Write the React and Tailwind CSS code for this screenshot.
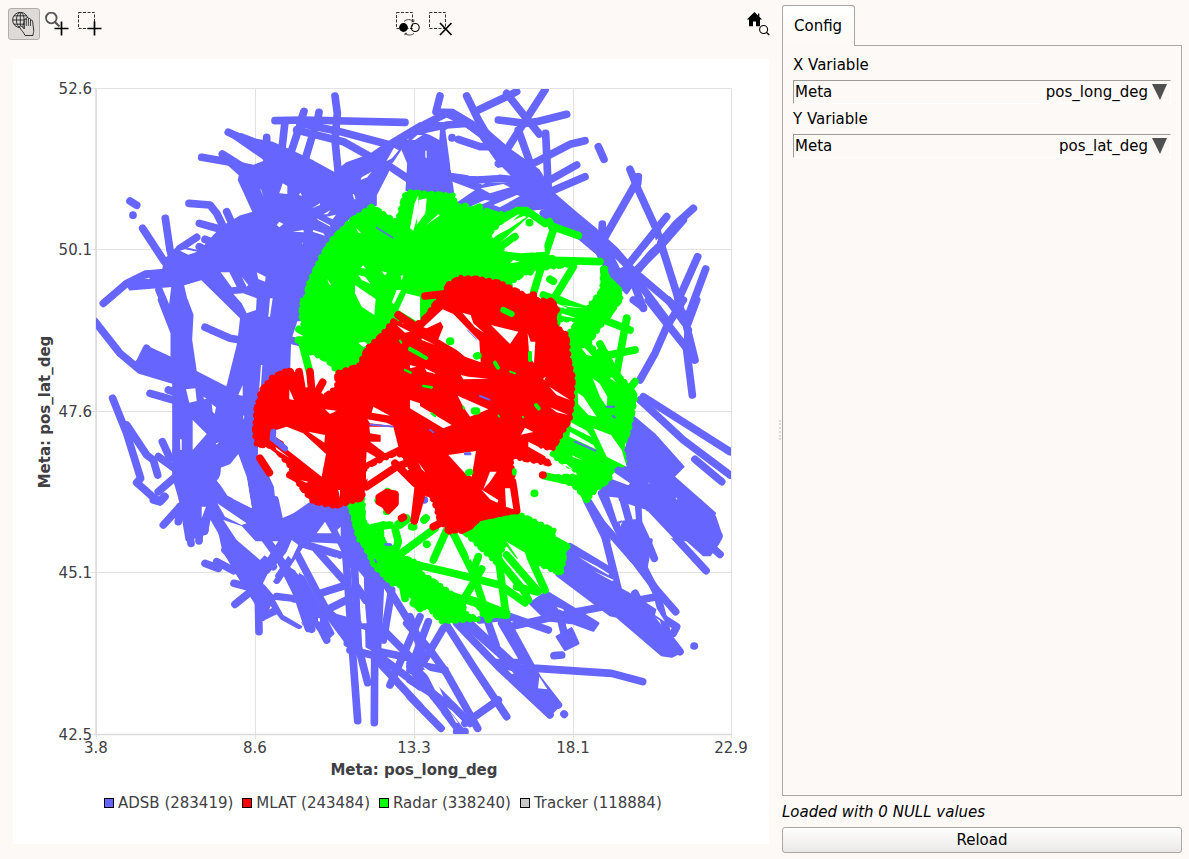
import React from "react";

const BLUE = "#6666ff";
const GREEN = "#00ff00";
const RED = "#ff0000";

// Track data is stored in six map tiles, three units per plot pixel.
const ORIGINS = {
  A: [90, 80],
  B: [410, 80],
  C: [90, 300],
  D: [410, 300],
  E: [90, 500],
  F: [410, 500],
};

const ADSB = {
  areas: {
    A: [
      "407,157 455,163 500,180 545,188 600,212 670,245 733,280 770,250 840,225 890,190 990,130 990,165 945,175 905,225 893,275 857,345 857,375 780,410 710,490 660,590 630,720 460,720 335,597 275,615 120,628 110,610 165,575 220,570 225,540 265,500 330,515 370,470 400,440 450,410 492,398 447,300 450,285 390,230 430,245 490,258 525,245 520,235",
      "250,600 275,600 303,720 235,720",
      "930,190 990,170 990,335 950,330 955,250",
    ],
    B: [
      "0,150 50,125 100,130 120,280 130,345 0,330",
      "75,88 130,90 230,150 300,210 385,270 430,340 500,400 560,450 620,505 690,585 650,640 600,590 560,520 500,470 430,420 400,380 330,310 260,240 210,170 130,110",
      "150,375 240,330 330,310 400,340 400,385 250,400",
    ],
    C: [
      "245,0 290,0 307,45 303,120 317,215 400,258 500,300 500,460 390,500 350,560 270,600 250,530 250,240 150,215 135,190 180,145 245,175",
      "460,0 640,0 600,120 597,210 540,240 500,300 500,470 440,460 400,300 415,250 445,130",
      "250,450 390,490 388,520 380,545 410,590 490,630 475,540 445,460 505,470 548,560 558,650 580,665 660,610 780,620 800,720 400,720 360,650 350,700 290,720 270,600",
    ],
    D: [
      "670,350 735,405 820,500 790,530 915,640 905,655 935,705 930,720 815,720 720,630 690,620 570,580 610,500 650,440",
    ],
    E: [
      "380,60 420,110 520,190 560,160 515,250 550,290 520,360 510,330 440,220 400,150",
      "590,200 640,230 700,340 730,400 710,420 670,370 640,330",
      "755,60 790,80 880,240 870,460 830,440 825,230 800,200 770,200",
    ],
    F: [
      "720,0 870,0 915,50 935,110 925,130 900,165 880,165 830,120",
      "465,135 490,145 600,208 620,260 690,300 770,400 815,455 785,470 755,465 620,350 600,345 440,225",
      "360,310 410,275 500,330 565,370 550,392 490,370 410,360",
      "440,410 485,385 505,430 465,450",
      "640,65 690,60 725,120 710,200 670,190 620,130",
      "260,480 340,480 320,510 260,505",
      "355,500 400,560 450,615 415,650 300,530",
    ],
  },
  tracks: {
    A: [
      "735,48 742,100 735,180 745,280",
      "555,122 640,120 945,127",
      "642,94 636,112",
      "687,97 683,120",
      "585,125 575,215",
      "632,130 597,235",
      "672,150 642,250",
      "630,130 750,155 890,192",
      "620,150 760,185 850,235",
      "415,157 600,240",
      "335,232 430,248",
      "397,222 520,300",
      "530,172 530,200",
      "120,363 140,376",
      "129,405 129,406",
      "297,370 360,375 380,400 400,440",
      "410,395 430,440",
      "328,430 400,450",
      "345,478 400,500",
      "328,500 365,520",
      "320,472 270,505",
      "226,415 240,510 270,620",
      "158,445 220,540 270,600",
      "40,670 110,610 165,583 260,580",
      "207,630 245,720",
      "900,260 960,300",
      "900,240 940,180",
    ],
    B: [
      "90,48 78,95",
      "0,160 50,130 110,100 230,160",
      "0,190 110,135 170,130 240,180",
      "170,48 205,120 240,180",
      "205,90 300,45 320,35",
      "290,40 345,110 388,162",
      "405,30 350,115 290,210",
      "265,120 345,130 380,125 470,103",
      "325,150 375,290",
      "407,160 415,330",
      "370,250 480,193 525,182",
      "420,300 500,255",
      "420,335 525,290",
      "145,178 210,200 250,200 320,290",
      "565,200 582,238",
      "265,252 275,250",
      "126,173 126,174",
      "120,290 200,300 270,295 320,300",
      "120,290 200,320 290,355",
      "150,375 230,320 330,320",
      "400,400 430,430",
      "577,432 575,480",
      "580,480 680,305",
      "660,268 685,330 740,450 800,640 820,720",
      "685,290 683,310",
      "770,410 650,560",
      "850,385 800,430 740,500 660,600",
      "820,420 750,500 680,570",
      "660,580 700,685",
      "690,590 820,700",
      "863,530 805,660",
      "887,567 830,720",
      "680,600 770,720",
    ],
    C: [
      "15,65 90,160 150,210 250,240",
      "170,145 160,165 150,185",
      "345,82 420,115 450,120",
      "415,0 465,40",
      "215,0 250,90",
      "180,280 250,300",
      "235,270 250,275",
      "68,295 110,400 152,535 140,548 190,592 210,605 222,590",
      "110,375 170,465 190,480 203,525",
      "217,425 240,475",
      "205,470 260,510",
      "205,575 280,510",
      "545,390 545,415 585,448",
      "600,120 640,130",
      "300,330 335,360 380,360",
    ],
    D: [
      "670,0 700,22",
      "715,0 830,145",
      "775,0 825,70",
      "860,0 830,80 855,180",
      "820,0 770,80 735,160 690,240",
      "835,90 830,150 847,285",
      "700,290 960,455",
      "690,300 820,420 960,525",
      "855,478 935,545",
      "530,600 570,680 590,720",
      "575,580 620,680 640,720",
      "42,600 43,600",
      "173,460 174,460",
    ],
    E: [
      "190,0 210,5 225,-10",
      "220,75 270,20",
      "265,65 270,20",
      "303,130 290,20",
      "327,123 330,30",
      "345,90 345,30",
      "345,190 385,205",
      "380,185 430,212",
      "405,150 450,200",
      "432,250 510,270",
      "435,313 500,260",
      "507,395 505,300",
      "520,350 560,330",
      "520,270 580,350 627,375",
      "560,290 640,300",
      "390,20 520,110",
      "400,70 470,140 550,200",
      "555,0 570,70 640,40",
      "510,230 600,90 690,30",
      "530,210 630,90 680,60",
      "560,240 640,120 700,40",
      "500,80 560,160 620,280 665,388",
      "520,110 600,220 655,385",
      "650,300 710,420",
      "620,160 720,350 780,430",
      "600,120 750,165",
      "660,115 760,120",
      "680,150 760,240",
      "690,280 770,255",
      "710,330 770,300",
      "710,345 850,385",
      "715,50 765,150",
      "760,60 770,200 785,420 803,662",
      "790,130 805,440 833,548",
      "840,200 855,300 853,668",
      "880,240 960,370 990,420",
      "905,270 880,420",
      "800,260 860,350",
      "860,370 990,500",
      "870,455 990,480",
      "780,450 870,470 990,560",
      "870,490 990,620",
      "990,350 920,510 900,555",
      "720,340 780,400 772,430",
    ],
    F: [
      "535,5 575,70 625,270",
      "590,0 625,60",
      "575,70 680,190 740,270 797,335",
      "640,0 690,180 740,280",
      "685,0 690,70 733,175",
      "720,30 888,212",
      "870,110 930,163",
      "480,140 605,215 620,260",
      "740,280 775,410 810,455",
      "690,310 800,380 790,400",
      "675,280 690,310",
      "500,335 740,290",
      "852,438 853,438",
      "300,380 500,335",
      "210,360 300,350 415,390",
      "455,370 470,430",
      "432,467 455,465",
      "235,370 258,435",
      "140,370 265,500 420,645",
      "160,365 290,480 400,600",
      "180,370 330,510",
      "275,370 340,480 445,615",
      "290,365 380,530",
      "320,505 380,505 605,520 698,545",
      "110,375 190,500 290,650",
      "100,385 20,520",
      "462,642 463,643",
      "0,350 40,470",
      "55,365 0,510",
      "-10,370 60,450 110,520 203,685",
      "20,510 180,670",
      "0,540 130,620",
      "0,500 150,690",
      "0,590 93,685",
      "140,695 165,695",
      "265,600 165,670",
      "105,635 150,695",
      "0,490 105,510",
    ],
  },
  gaps: {
    A: [
      "568,340 578,310 592,318 592,342",
      "560,435 568,425 580,432 568,442",
      "608,455 640,450 642,457",
      "668,455 705,467 700,460 670,450",
      "392,577 418,577 440,620 425,622",
      "500,577 527,590 525,605 505,597",
      "455,590 475,615 470,620",
      "430,642 460,640 500,655 498,690 470,700 455,670",
      "540,655 548,655 540,710 535,710",
      "666,385 690,370 690,375",
      "700,403 722,390 712,403",
      "815,292 845,275 832,292 812,300",
      "788,342 792,342 797,358 792,358",
      "626,345 632,338 636,347",
      "710,410 738,404 728,418",
      "680,415 720,436 721,440 684,420",
      "510,325 514,330 520,350",
      "270,512 285,508 322,515 295,524",
      "163,596 180,593 178,597",
      "889,244 912,203 926,211 906,235",
      "636,488 638,488 638,494",
    ],
    B: [
      "5,180 22,165 38,165 15,180",
      "45,160 90,150 88,180 60,165",
      "46,212 50,212 50,235 46,232",
      "120,185 140,200 200,212 270,270 265,285 180,288 122,270",
      "212,325 280,312 300,322 240,340",
      "180,380 225,360 240,362 200,380",
      "250,375 320,345 330,348 270,382",
      "695,520 745,475 740,490 700,528",
      "615,535 640,560 630,565",
    ],
    C: [
      "380,542 445,462 470,530 485,625 430,597",
      "365,312 378,322 374,342 368,335",
      "308,360 350,402 308,450",
      "288,268 316,265 320,303 298,308",
      "513,195 517,195 512,270 506,290",
      "445,285 458,255 458,287",
      "270,418 275,418 275,450 271,450",
      "382,610 470,670 455,675 405,650",
      "378,430 387,427 380,434",
      "335,620 348,620 335,655",
      "340,290 350,296 342,298",
      "460,345 463,350 460,360",
    ],
    D: [
      "610,515 660,550 655,556 603,536",
      "598,590 625,593 640,660 622,665",
      "695,625 715,635 790,715 720,715 697,665",
      "715,548 718,548 718,552",
      "797,592 803,598 798,598",
    ],
    E: [
      "520,252 545,217 557,232 538,262",
      "588,160 605,120 625,135 604,178",
      "400,60 455,78 530,160 510,180 440,120",
      "555,300 605,305 640,380 580,345",
      "680,690 681,690 681,691",
      "680,100 705,65 725,100",
      "684,355 690,355 690,365 684,363",
      "742,90 752,80 752,110",
      "810,310 825,312 830,370 815,370",
      "620,195 628,210 626,225 617,215",
      "740,170 752,190 738,182",
    ],
    F: [
      "388,530 412,568 384,565",
      "505,170 560,198 598,222 595,225 545,196",
      "550,212 612,240 606,243",
      "120,635 145,668 138,668",
      "440,320 460,328 462,334 445,328",
      "485,380 515,392 500,400",
      "740,325 765,365 735,345",
      "40,500 70,520 100,590 75,570",
    ],
  },
};

const RADAR = {
  areas: {
    A: [
      "845,378 920,425 945,340 970,335 990,345 990,720 635,720 640,690 655,610 693,530 723,480 783,420",
    ],
    B: [
      "0,335 130,345 138,375 250,400 300,400 240,460 250,510 410,525 480,555 360,570 300,610 320,720 0,720",
      "578,565 600,600 635,650 590,720 530,720 535,680 575,630",
      "430,695 460,690 530,700 540,720 450,720",
    ],
    C: [
      "637,0 805,0 855,42 870,-10 940,-10 905,60 860,110 810,190 740,215 710,180 655,155 635,120 652,108 640,80 632,45",
      "780,615 820,595 820,660 860,720 805,720",
    ],
    D: [
      "555,0 632,0 538,125 560,160 580,140 605,190 630,230 665,265 678,290 658,390 637,445 646,495 613,495 598,540 558,570 530,600 490,555 420,530 520,527 425,465 470,390 495,300 490,200 475,100 540,20",
    ],
    E: [
      "780,20 815,0 820,60 860,110 950,175 990,190 990,330 940,260 905,252 853,200 803,100",
    ],
    F: [
      "160,95 190,60 330,43 435,92 425,125 465,150 462,185 453,222 385,192 350,160 290,120 260,190",
      "0,200 60,235 100,262 165,310 160,335 205,358 95,366 60,330 0,260",
    ],
  },
  tracks: {
    B: [
      "70,375 140,390 240,420",
      "165,380 166,380",
      "195,388 208,382",
      "230,395 250,402",
      "240,440 320,392 350,392 405,430",
      "240,500 350,400",
      "358,428 359,428",
      "430,440 505,467",
      "418,425 430,450 410,510 370,640",
      "315,470 250,515",
      "250,520 400,540 570,545",
      "490,560 435,650",
      "290,545 360,575",
      "420,598 430,604",
      "400,645 530,690 550,700",
      "583,567 583,620",
      "600,605 625,630",
      "650,715 650,716",
    ],
    C: ["627,88 650,100", "625,120 640,120", "635,125 660,220", "820,132 821,132"],
    D: [
      "450,0 530,40 660,90",
      "440,30 510,60",
      "440,60 440,70",
      "650,55 618,230",
      "560,172 675,150",
      "570,132 600,190",
      "675,245 660,265",
      "120,124 121,124",
      "203,167 204,167",
      "373,580 374,580",
      "530,598 510,560",
      "405,528 500,548",
      "42,660 48,654",
      "5,680 8,680",
    ],
    E: [
      "850,82 900,75",
      "870,90 880,150",
      "930,75 950,60",
      "915,85 925,125 910,170",
      "935,240 945,295",
      "970,80 971,80",
      "970,310 1000,320",
    ],
    F: [
      "70,180 110,90",
      "125,90 190,220 235,358",
      "75,85 -40,170",
      "0,190 130,220 270,255 345,308",
      "265,170 288,345",
      "250,160 340,270 355,300",
      "360,170 405,270",
      "290,165 385,275",
      "290,120 325,165",
      "425,115 470,140",
      "215,207 160,300",
      "205,170 190,210",
      "170,295 200,305 290,340",
      "220,340 290,345",
      "70,270 200,310 240,350",
      "320,260 380,275",
      "15,305 30,325",
      "50,133 51,133",
    ],
  },
  gaps: {
    A: [
      "795,615 857,657 853,705 815,680 795,640",
      "920,630 933,630 912,672 905,668",
      "948,640 990,650 990,730 925,690",
      "805,585 825,590 842,612 815,600",
      "812,563 820,556 827,566",
      "875,573 892,578 884,586",
      "932,588 940,585 935,602",
      "797,444 813,458 807,460",
      "960,445 974,370 985,345 985,400 970,452",
      "712,597 724,615 717,613",
    ],
    B: [
      "26,360 50,355 46,400 20,435",
      "46,437 85,403 90,406",
      "243,475 290,430 340,408 350,410 300,445",
      "280,513 310,485 400,470 405,515 330,520",
      "310,540 330,545 300,550",
    ],
    C: ["805,128 825,125 833,135 820,142"],
    D: [
      "550,385 603,405 635,450 650,500 590,470",
      "548,235 570,252 592,290 590,320 570,290",
      "503,278 520,290 560,350 535,345 505,312",
      "515,145 525,145 547,168 530,165",
      "480,365 530,392 545,412 482,380",
      "480,395 550,435 558,448 478,410",
      "455,492 470,492 490,510",
      "600,235 606,232 618,247",
      "455,15 525,25 480,22",
      "455,40 500,55 455,48",
      "485,465 520,482 490,472",
    ],
    E: ["885,90 905,100 903,110 882,110"],
    F: [
      "290,125 345,158 350,175 330,185",
      "175,160 185,175 178,180",
    ],
  },
};

const MLAT = {
  areas: {
    B: [
      "115,612 150,592 200,594 270,607 330,637 435,682 435,730 280,730 250,670 245,690 260,730 160,730 100,680 40,720 75,670 100,640",
    ],
    C: [
      "545,232 595,207 608,215 622,230 632,265 655,270 675,285 705,288 740,260 740,218 805,197 832,142 872,107 910,62 950,80 990,110 990,500 920,460 830,500 818,596 735,620 668,606 620,545 600,500 550,440 499,435 493,400 497,330 512,272",
    ],
    D: [
      "100,0 430,0 438,30 430,70 471,104 478,180 490,230 488,300 481,358 463,388 428,448 360,430 422,493 300,470 305,490 322,632 210,656 185,678 130,693 100,650 70,600 30,560 0,540 0,80 30,65",
    ],
    F: ["70,0 300,0 322,33 210,56 185,78 150,93 125,93 90,68"],
  },
  tracks: {
    A: ["925,705 990,755"],
    B: ["45,648 120,640", "370,645 370,700", "415,670 438,690", "95,680 20,770"],
    C: [
      "925,45 1000,95",
      "510,475 538,518",
      "600,525 665,560",
      "627,215 640,290",
      "660,215 665,270",
      "698,247 680,280 640,310",
      "550,440 690,540",
      "700,300 740,295",
      "830,560 920,500 990,475",
      "830,480 990,420",
      "915,490 975,550",
      "1002,560 973,662",
      "840,408 865,415",
      "935,655 940,652",
      "868,592 890,578 915,583 915,610 895,630 885,615 868,605 900,598",
    ],
    D: [
      "90,75 30,110",
      "95,10 10,105",
      "90,125 155,165",
      "25,560 13,662",
      "398,525 399,525",
      "310,560 320,632",
      "270,560 265,620",
      "230,565 250,560",
      "70,680 110,660",
      "115,690 118,692",
      "155,690 180,678",
    ],
  },
  gaps: {
    C: [
      "558,390 590,380 640,400 708,462 695,530 590,448 580,425 555,410",
      "655,395 705,405 703,428",
      "598,268 612,300 598,298",
      "850,320 900,347 845,338",
      "705,328 740,332 720,342",
      "920,75 960,95 945,98",
      "832,358 890,368 910,378 840,370",
      "838,380 910,380 925,440 885,460 840,425 872,425 872,405 840,400",
      "830,455 858,472 828,488",
      "960,300 990,310 990,340",
      "556,440 600,475 560,450",
      "630,540 655,545 650,548",
      "745,570 750,570 750,595",
      "828,515 870,492 828,540",
    ],
    D: [
      "98,28 130,42 208,122 212,187 165,170 140,150 85,118 100,80 92,65 50,85 40,82",
      "143,287 235,328 180,350 160,320",
      "0,300 30,318 125,375 100,385 0,325",
      "115,465 198,453 185,530 165,520",
      "243,75 325,95 300,132",
      "353,100 362,125 376,125 372,190 358,170",
      "152,225 175,230 235,236 160,238",
      "418,260 480,300 440,285",
      "345,383 370,396 333,404",
      "355,425 385,440 425,480 355,440",
      "157,38 182,45 190,70 222,98 195,82",
      "420,322 475,345 440,337",
      "240,515 260,515 240,545 220,568",
      "213,568 265,600 262,608 240,598",
      "285,565 288,620 310,628 300,565",
      "0,195 20,200 0,205",
      "25,487 47,518 35,508",
      "400,235 408,230 402,242",
      "35,115 75,135 35,120",
      "45,205 80,222 50,215",
    ],
  },
};

// Narrow marks of other series that show through the dense areas.
const DETAILS = [
  ["A", "860,443 908,473", BLUE, 5],
  ["C", "840,374 908,380", BLUE, 5],
  ["C", "550,395 548,415 585,445", BLUE, 18],
  ["C", "960,145 990,162", GREEN, 10],
  ["C", "945,210 962,218", GREEN, 7],
  ["C", "930,122 934,128", GREEN, 6],
  ["D", "0,148 48,174", GREEN, 12],
  ["D", "280,30 305,42", GREEN, 18],
  ["D", "255,188 264,203", GREEN, 12],
  ["D", "360,158 360,180", GREEN, 12],
  ["D", "40,258 65,262", GREEN, 8],
  ["D", "378,315 386,325", GREEN, 12],
  ["D", "120,124 121,124", GREEN, 24],
  ["D", "200,168 204,167", GREEN, 22],
  ["D", "193,333 200,333", GREEN, 22],
  ["D", "175,518 180,516", GREEN, 20],
  ["D", "313,512 313,520", GREEN, 14],
  ["D", "65,340 75,348", GREEN, 7],
  ["D", "300,215 315,220", GREEN, 6],
  ["D", "265,346 268,350", GREEN, 5],
  ["D", "338,350 340,352", GREEN, 5],
  ["D", "160,320 162,326", GREEN, 6],
  ["D", "210,288 238,299", BLUE, 6],
  ["D", "60,389 70,397", BLUE, 5],
  ["D", "172,90 200,118", BLUE, 3],
  ["D", "495,425 556,452", BLUE, 6],
  ["D", "590,320 612,320", BLUE, 6],
  ["D", "608,348 614,352", BLUE, 6],
  ["D", "166,461 180,461", BLUE, 9],
  ["E", "887,133 902,134", BLUE, 8],
  ["E", "855,180 858,186", BLUE, 6],
];

function Series({ data, color, beaded = false }) {
  const tiles = Object.keys(ORIGINS);
  const place = (t) => `translate(${ORIGINS[t][0]} ${ORIGINS[t][1]}) scale(0.33333)`;
  return (
    <g strokeLinecap="round" strokeLinejoin="round">
      {tiles.map((t) => (
        <g key={t} transform={place(t)} stroke={color}>
          {(data.areas[t] || []).map((p, i) => (
            <g key={i}>
              <polygon points={p} fill={color} strokeWidth="7" />
              {beaded && (
                <polygon points={p} fill="none" strokeWidth="15" strokeDasharray="2 17 9 15 0.1 21" />
              )}
            </g>
          ))}
          {(data.tracks[t] || []).map((p, i) => (
            <polyline key={i} points={p} fill="none" strokeWidth="23" />
          ))}
        </g>
      ))}
      {tiles.map((t) => (
        <g key={t} transform={place(t)} fill="#fff">
          {(data.gaps[t] || []).map((p, i) => (
            <polygon key={i} points={p} />
          ))}
        </g>
      ))}
    </g>
  );
}

const X_TICKS = [
  [96, "3.8"],
  [255, "8.6"],
  [414, "13.3"],
  [573, "18.1"],
  [731, "22.9"],
];
const Y_TICKS = [
  [88, "52.6"],
  [249, "50.1"],
  [411, "47.6"],
  [572, "45.1"],
  [734, "42.5"],
];

function Plot() {
  return (
    <svg
      viewBox="13 59 756 728"
      className="block h-auto w-full fill-[#404044] text-[15px]"
      role="img"
      aria-label="Scatter plot of pos_lat_deg over pos_long_deg"
    >
      <defs>
        <clipPath id="plot-area">
          <rect x="96" y="89" width="635" height="645" />
        </clipPath>
      </defs>
      <g stroke="#e2e2e2" strokeWidth="1">
        {X_TICKS.map(([x]) => (
          <line key={x} x1={x + 0.5} x2={x + 0.5} y1="88" y2="739" />
        ))}
        {Y_TICKS.map(([y]) => (
          <line key={y} x1="91" x2="732" y1={y + 0.5} y2={y + 0.5} />
        ))}
        <path d="M96 88V734.5H732" fill="none" stroke="#dcdcdc" strokeWidth="1.5" />
      </g>
      <g clipPath="url(#plot-area)">
        <Series data={ADSB} color={BLUE} />
        <Series data={RADAR} color={GREEN} beaded />
        <g transform="translate(90 300) scale(0.33333)">
          <path
            d="M892 572L896 574M862 602L866 606M888 636L892 636"
            stroke={GREEN}
            strokeWidth="18"
            strokeLinecap="round"
          />
          <path d="M850 685L880 675M925 672L950 655" stroke={GREEN} strokeWidth="24" strokeLinecap="round" />
        </g>
        <Series data={MLAT} color={RED} beaded />
        {DETAILS.map(([t, p, c, w], i) => (
          <polyline
            key={i}
            transform={`translate(${ORIGINS[t][0]} ${ORIGINS[t][1]}) scale(0.33333)`}
            points={p}
            fill="none"
            stroke={c}
            strokeWidth={w}
            strokeLinecap="round"
          />
        ))}
      </g>
      {X_TICKS.map(([x, label]) => (
        <text key={label} x={x} y="753" textAnchor="middle">
          {label}
        </text>
      ))}
      {Y_TICKS.map(([y, label]) => (
        <text key={label} x="92" y={y + 6} textAnchor="end">
          {label}
        </text>
      ))}
      <text x="414" y="775" textAnchor="middle" className="font-bold">
        Meta: pos_long_deg
      </text>
      <text transform="translate(50 412) rotate(-90)" textAnchor="middle" className="font-bold">
        Meta: pos_lat_deg
      </text>
    </svg>
  );
}

const LEGEND = [
  ["ADSB (283419)", "bg-[#6666ff]"],
  ["MLAT (243484)", "bg-[#ff0000]"],
  ["Radar (338240)", "bg-[#00ff00]"],
  ["Tracker (118884)", "bg-[#c8c8c8]"],
];

function ToolButton({ label, pressed = false, children }) {
  return (
    <button
      type="button"
      aria-label={label}
      aria-pressed={pressed}
      className={
        pressed
          ? "flex size-8 items-center justify-center rounded-[3px] border border-[#b0aeab] bg-[#dddad7]"
          : "flex size-8 items-center justify-center rounded-[3px] border border-transparent"
      }
    >
      <svg viewBox="0 0 24 24" className="size-6 shrink-0" fill="none" stroke="#000">
        {children}
      </svg>
    </button>
  );
}

const Marquee = () => (
  <rect x="0.5" y="0.5" width="16" height="16" stroke="#333" strokeDasharray="3 1.5" />
);

function Toolbar() {
  return (
    <div className="flex items-center justify-between">
      <div className="flex gap-px">
        <ToolButton label="Pan" pressed>
          <g stroke="#222" strokeWidth="0.9">
            <circle cx="8.3" cy="8" r="7.7" />
            <ellipse cx="8.3" cy="8" rx="3.8" ry="7.7" />
            <path d="M8.3 0.3V15.7M0.6 8H16M2 3.8H14.6M2 12.2H14.6" />
          </g>
          <path
            d="M13 23.5C12 20.5 9 18 7.7 15.5C7.2 14 8.8 13.3 10 14.6L12.3 17V8C12.3 6.5 14.3 6.5 14.3 8V6.5C14.3 5 16.4 5 16.4 6.5V7.5C16.4 6 18.5 6 18.5 7.5V9C18.7 7.6 20.6 7.8 20.6 9.3L21.7 18C22 20 21 21 21 23.5Z"
            fill="#dddad7"
            stroke="#222"
            strokeWidth="0.9"
          />
          <path d="M14.3 8V14M16.4 7.5V14M18.5 9V14" stroke="#222" strokeWidth="0.8" />
        </ToolButton>
        <ToolButton label="Zoom in">
          <circle cx="6.3" cy="6" r="5.3" stroke="#555" strokeWidth="1.8" />
          <path d="M10 10L14.5 14.5" stroke="#555" strokeWidth="2.2" />
          <path d="M16.5 9.5V23.5M9.5 16.5H23.5" strokeWidth="1.7" />
        </ToolButton>
        <ToolButton label="Select area">
          <Marquee />
          <path d="M16.5 9.5V23.5M9.5 16.5H23.5" strokeWidth="1.7" />
        </ToolButton>
      </div>
      <div className="flex gap-px">
        <ToolButton label="Invert selection">
          <Marquee />
          <circle cx="7.5" cy="15.5" r="4.4" fill="#000" stroke="none" />
          <circle cx="19.2" cy="15.5" r="4" strokeWidth="1.1" />
          <path d="M8 9.5C10 7 15 7 17.5 9.5M17.8 7.5V9.8H15.5M9 21.5C11 23.5 15 23.5 18 21.5M9 23.3V21.3H11" stroke="#333" strokeWidth="0.9" />
        </ToolButton>
        <ToolButton label="Clear selection">
          <Marquee />
          <path d="M11 11L22.5 23M22.5 11L11 23" strokeWidth="1.7" />
        </ToolButton>
      </div>
      <ToolButton label="Reset view">
        <path d="M8.5 0L0.8 7.5H3V14.3H7V9.5H10V14.3H14V7.5H16.2L13.3 4.7V1.5H12V3.4Z" fill="#000" stroke="none" />
        <circle cx="17.6" cy="17.5" r="4" strokeWidth="1.1" />
        <path d="M20.5 20.5L23.3 23" strokeWidth="1.4" />
      </ToolButton>
    </div>
  );
}

function VariableField({ id, label, value }) {
  return (
    <div className="mb-1">
      <label htmlFor={id} className="mb-[5px] block leading-5">
        {label}
      </label>
      <div className="relative flex h-6 items-center border border-t-[#9c9996] border-r-white border-b-white border-l-[#9c9996] pl-px">
        <span className="leading-5">Meta</span>
        <select
          id={id}
          defaultValue={value}
          className="h-5 min-w-0 flex-1 appearance-none bg-transparent pr-[22px] text-right leading-5 outline-none [text-align-last:right]"
        >
          <option>{value}</option>
        </select>
        <svg viewBox="0 0 15 16" className="pointer-events-none absolute top-[3px] right-[3px] h-4 w-[15px]" fill="#505050">
          <path d="M0 0H15L8 16Z" />
        </svg>
      </div>
    </div>
  );
}

export default function App() {
  return (
    <main className="flex min-h-screen bg-[#fdf9f6] font-['DejaVu_Sans',sans-serif] text-[15px] text-black">
      <section className="flex min-w-0 flex-1 flex-col pt-2 pr-1 pb-[15px] pl-2">
        <Toolbar />
        <div className="mt-[19px] mr-[5px] ml-[5px] flex-1 bg-white">
          <Plot />
          <ul className="flex flex-wrap gap-x-[9px] pl-[91px] leading-8 text-[#404044]">
            {LEGEND.map(([name, fill]) => (
              <li key={name} className="flex items-center gap-1">
                <span className={`size-2.5 border border-black ${fill}`} />
                {name}
              </li>
            ))}
          </ul>
        </div>
      </section>
      <div className="flex w-1 items-center justify-center" aria-hidden="true">
        <div className="h-5 w-0 border-l-2 border-dotted border-[#dedad7]" />
      </div>
      <aside className="mr-[7px] flex w-[34%] max-w-[400px] shrink-0 flex-col pt-[5px] pb-1.5">
        <div role="tablist" className="flex">
          <button
            type="button"
            role="tab"
            aria-selected="true"
            className="relative z-10 -mb-px h-[41px] rounded-t-[3px] border border-b-0 border-[#a9a6a3] bg-linear-to-b from-white to-[#fdf9f6] pr-3 pl-[11px]"
          >
            Config
          </button>
        </div>
        <div role="tabpanel" className="flex flex-1 flex-col gap-px border border-[#a9a6a3] px-2.5 pt-[9px]">
          <VariableField id="x-variable" label="X Variable" value="pos_long_deg" />
          <VariableField id="y-variable" label="Y Variable" value="pos_lat_deg" />
        </div>
        <p className="pt-1.5 pb-[5px] leading-5 italic">Loaded with 0 NULL values</p>
        <button
          type="button"
          className="h-[26px] rounded-[3px] border border-[#a9a6a3] bg-linear-to-b from-white to-[#ebe9e7]"
        >
          Reload
        </button>
      </aside>
    </main>
  );
}
